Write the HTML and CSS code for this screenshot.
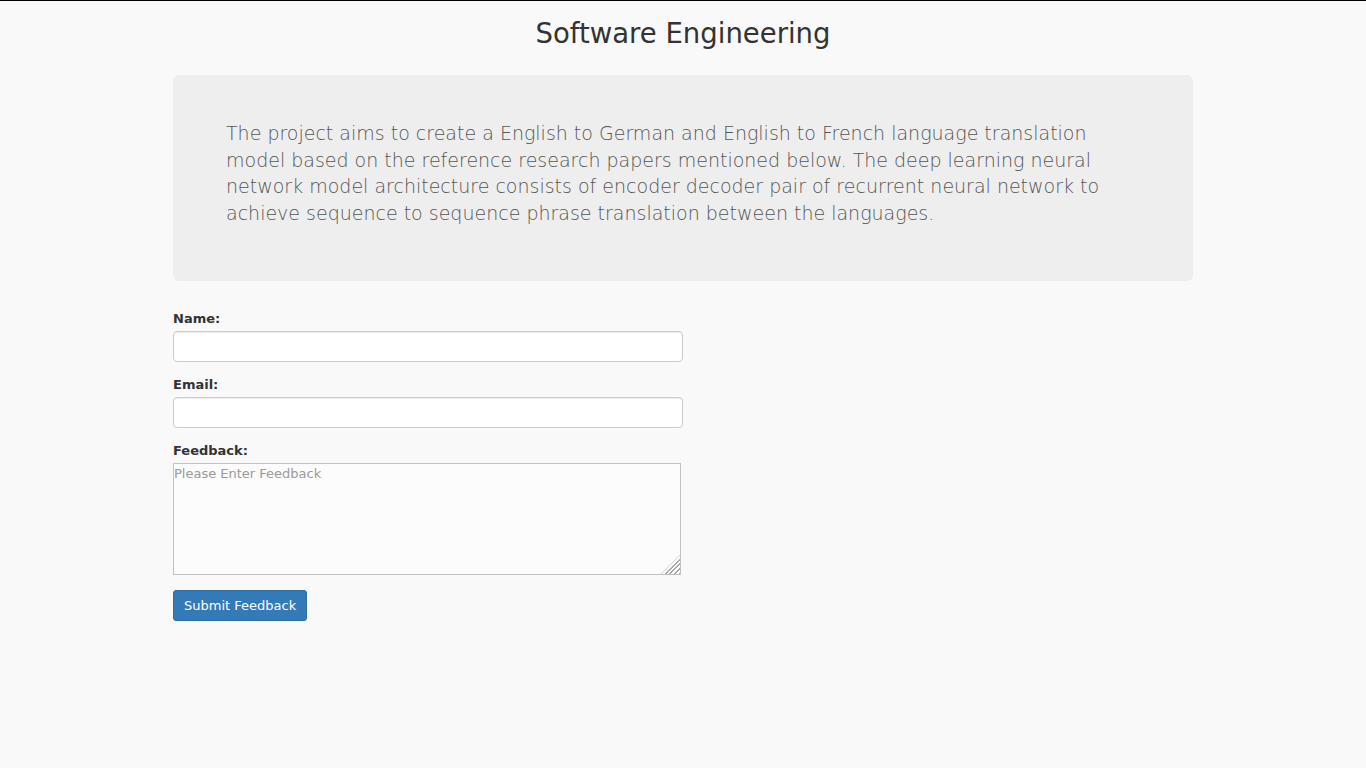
FILE: index.html
```html
<!DOCTYPE html>
<html>
<head>
<meta charset="utf-8">
<title>Software Engineering</title>
<link rel="stylesheet" href="styles.css">
</head>
<body>
<div class="topline"></div>
<h1 class="title">Software Engineering</h1>
<div class="container">
  <div class="jumbotron">
    <p>The project aims to create a English to German and English to French language translation model based on the reference research papers mentioned below. The deep learning neural network model architecture consists of encoder decoder pair of recurrent neural network to achieve sequence to sequence phrase translation between the languages.</p>
  </div>
  <form class="feedback-form">
    <div class="form-group">
      <label for="name">Name:</label>
      <input type="text" id="name" class="form-control">
    </div>
    <div class="form-group">
      <label for="email">Email:</label>
      <input type="email" id="email" class="form-control">
    </div>
    <div class="form-group form-group-last">
      <label for="feedback">Feedback:</label>
      <div class="area-wrap">
        <textarea id="feedback" class="feedback-area" placeholder="Please Enter Feedback"></textarea>
        <span class="grip"></span>
      </div>
    </div>
    <button type="button" class="btn-primary">Submit Feedback</button>
  </form>
</div>
</body>
</html>
```
FILE: styles.css
```css
html, body {
  margin: 0;
  padding: 0;
}
body {
  background: #f9f9f9;
  font-family: "DejaVu Sans", sans-serif;
  color: #333;
  font-size: 13px;
}
.topline {
  height: 1px;
  background: #000;
}
.title {
  margin: 16px 0 0;
  height: 33px;
  line-height: 33px;
  text-align: center;
  font-size: 27.5px;
  font-weight: 400;
  color: #333;
}
.container {
  width: 1020px;
  margin: 25px auto 0;
}
.jumbotron {
  background: #eeeeee;
  border-radius: 6px;
  padding: 45px 80px 52px 53px;
  height: 206px;
  box-sizing: border-box;
}
.jumbotron p {
  margin: 0;
  font-size: 19px;
  line-height: 26.67px;
  font-weight: 200;
  color: #555;
}
.feedback-form {
  width: 510px;
  margin-top: 30px;
}
.form-group {
  margin-bottom: 15px;
}
.form-group-last {
  margin-bottom: 15px;
}
.form-group label {
  display: block;
  font-weight: 700;
  font-size: 13px;
  line-height: 16px;
  margin-bottom: 4px;
}
.form-control {
  display: block;
  box-sizing: border-box;
  width: 510px;
  height: 31px;
  border: 1px solid #ccc;
  border-radius: 4px;
  background: #fff;
  box-shadow: inset 0 1px 1px rgba(0,0,0,.075);
  margin: 0;
}
.area-wrap {
  position: relative;
  width: 508px;
  height: 112px;
  margin-top: 1px;
}
.feedback-area {
  display: block;
  box-sizing: border-box;
  width: 508px;
  height: 112px;
  margin: 0;
  padding: 2px 1px 1px 0;
  border: 1px solid #c2c2c2;
  background: #fcfcfc;
  font-family: "DejaVu Sans", sans-serif;
  font-size: 13px;
  line-height: 16px;
  color: #333;
  resize: none;
}
.feedback-area::placeholder {
  color: #9a9a9a;
}
.grip {
  position: absolute;
  right: 1px;
  bottom: 1px;
  width: 19px;
  height: 19px;
  background: repeating-linear-gradient(135deg, #fcfcfc 0, #fcfcfc 2px, #a8a8a8 2px, #a8a8a8 3.4px);
  clip-path: polygon(100% 0, 100% 100%, 0 100%);
  pointer-events: none;
}
.btn-primary {
  display: block;
  height: 31px;
  padding: 0 10px;
  background: #337ab7;
  border: 1px solid #2e6da4;
  border-radius: 3px;
  color: #fff;
  font-family: "DejaVu Sans", sans-serif;
  font-size: 13px;
  margin-top: 0;
}
```
